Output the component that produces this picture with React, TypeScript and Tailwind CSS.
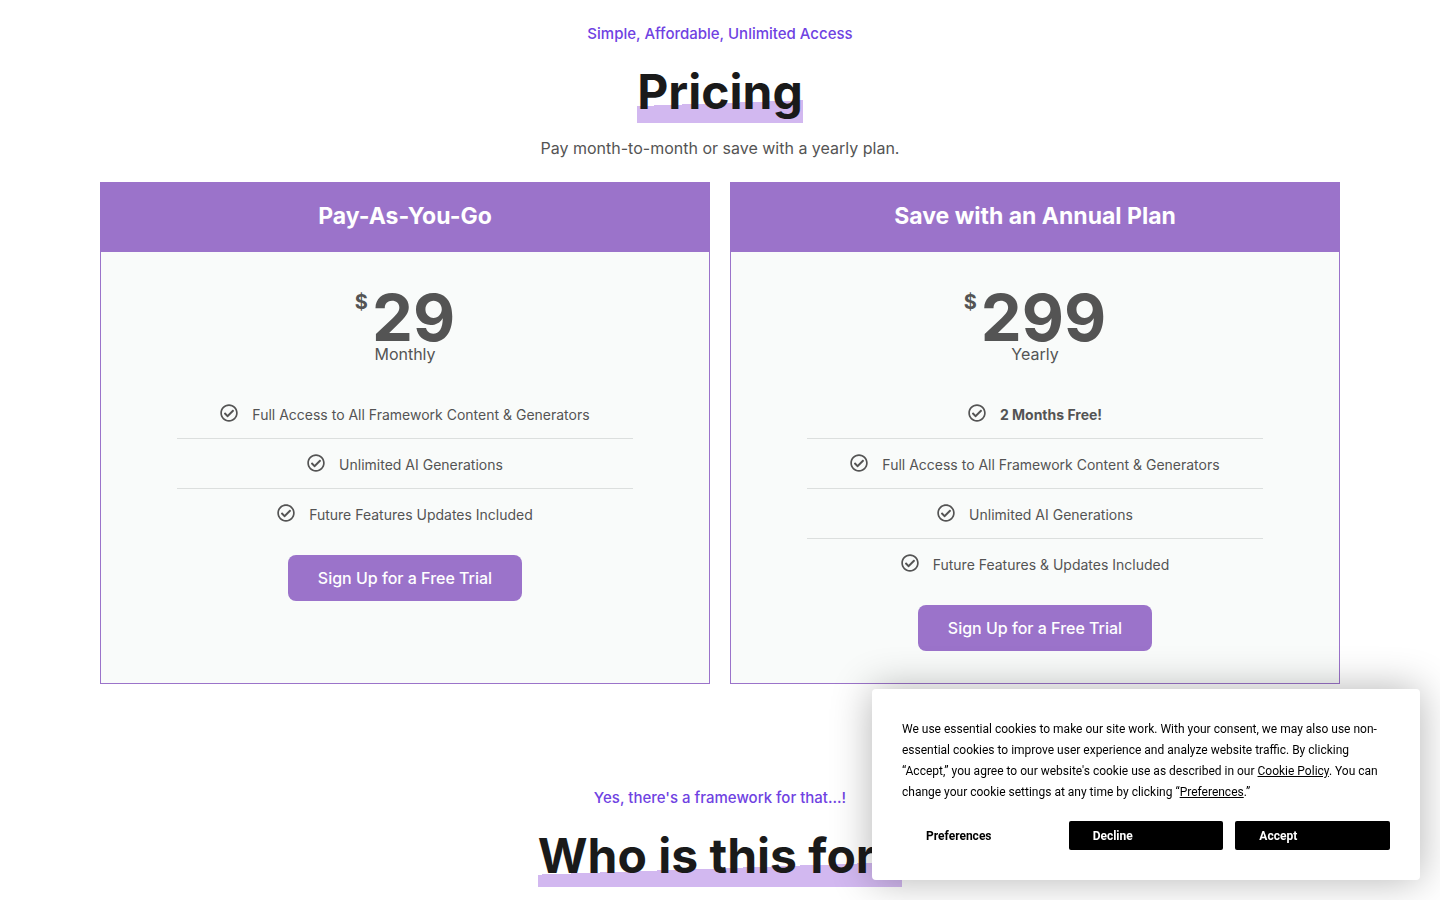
import { ReactNode, useState } from "react";
import { FaRegCheckCircle } from "react-icons/fa";

type Plan = {
  title: string;
  price: number;
  period: string;
  features: { text: string; bold?: boolean }[];
};

const plans: Plan[] = [
  {
    title: "Pay-As-You-Go",
    price: 29,
    period: "Monthly",
    features: [
      { text: "Full Access to All Framework Content & Generators" },
      { text: "Unlimited AI Generations" },
      { text: "Future Features Updates Included" },
    ],
  },
  {
    title: "Save with an Annual Plan",
    price: 299,
    period: "Yearly",
    features: [
      { text: "2 Months Free!", bold: true },
      { text: "Full Access to All Framework Content & Generators" },
      { text: "Unlimited AI Generations" },
      { text: "Future Features & Updates Included" },
    ],
  },
];

function SectionHeading({ eyebrow, children }: { eyebrow: string; children: ReactNode }) {
  return (
    <div className="text-center">
      <p className="text-[15px] leading-5 font-medium text-[#6f42e2]">{eyebrow}</p>
      <h2 className="mt-4 text-5xl leading-[64px] font-bold text-[#1a1a1a]">
        <span className="bg-[linear-gradient(178deg,transparent_66%,#d2b8f0_66%)] pb-0.5">{children}</span>
      </h2>
    </div>
  );
}

function PlanCard({ plan }: { plan: Plan }) {
  return (
    <article className="flex flex-col border border-[#9b73ca] bg-[#f9fbfa] text-[#545454]">
      <h3 className="bg-[#9b73ca] pt-[17px] pb-[19px] text-center text-[23px] leading-[33px] font-bold text-white">
        {plan.title}
      </h3>

      <div className="flex flex-col items-center pt-10 pb-8">
        <p className="flex items-start gap-1 font-bold">
          <span className="text-xl leading-5">$</span>
          <span className="text-[65px] leading-[52px]">{plan.price}</span>
        </p>
        <p className="text-base leading-5">{plan.period}</p>

        <ul className="mt-[25px] w-3/4 divide-y divide-[#dcdfde]">
          {plan.features.map((f) => (
            <li key={f.text} className="flex h-[50px] items-center justify-center gap-[14px] text-sm">
              <FaRegCheckCircle className="mb-0.5 size-[18px] shrink-0" />
              <span className={f.bold ? "pt-0.5 font-bold" : "pt-0.5"}>{f.text}</span>
            </li>
          ))}
        </ul>

        <a
          href="#signup"
          className="mt-4 rounded-lg bg-[#9b73ca] px-[30px] py-[11px] text-base font-medium text-white hover:bg-[#8a61bb]"
        >
          Sign Up for a Free Trial
        </a>
      </div>
    </article>
  );
}

function CookieBanner({ onClose }: { onClose: () => void }) {
  return (
    <div
      role="dialog"
      aria-label="Cookie consent"
      className="fixed right-5 bottom-5 w-full max-w-[548px] rounded bg-white p-[30px] font-['Roboto',sans-serif] text-xs text-black shadow-[0_0_40px_rgba(0,0,0,0.3)]"
    >
      <p className="leading-[21px]">
        We use essential cookies to make our site work. With your consent, we may also use non-essential
        cookies to improve user experience and analyze website traffic. By clicking “Accept,” you agree to
        our website's cookie use as described in our{" "}
        <a href="#cookie-policy" className="underline">Cookie Policy</a>. You can change your cookie
        settings at any time by clicking “<a href="#preferences" className="underline">Preferences</a>.”
      </p>
      <div className="mt-[18px] grid grid-cols-3 gap-3 font-bold">
        <button className="h-[29px] rounded-xs px-6 text-left">Preferences</button>
        <button onClick={onClose} className="h-[29px] rounded-xs bg-black px-6 text-left text-white">
          Decline
        </button>
        <button onClick={onClose} className="h-[29px] rounded-xs bg-black px-6 text-left text-white">
          Accept
        </button>
      </div>
    </div>
  );
}

export default function App() {
  const [showCookies, setShowCookies] = useState(true);

  return (
    <div className="h-screen overflow-hidden bg-white font-['Inter',sans-serif]">
      <main className="mx-auto max-w-[1280px] px-5 pt-6">
        <section>
          <SectionHeading eyebrow="Simple, Affordable, Unlimited Access">Pricing</SectionHeading>
          <p className="mt-3 text-center text-base text-[#545454]">
            Pay month-to-month or save with a yearly plan.
          </p>
          <div className="mt-[22px] grid grid-cols-2 gap-5">
            {plans.map((plan) => (
              <PlanCard key={plan.title} plan={plan} />
            ))}
          </div>
        </section>

        <section className="pt-[104px]">
          <SectionHeading eyebrow="Yes, there's a framework for that...!">Who is this for?</SectionHeading>
        </section>
      </main>

      {showCookies && <CookieBanner onClose={() => setShowCookies(false)} />}
    </div>
  );
}
